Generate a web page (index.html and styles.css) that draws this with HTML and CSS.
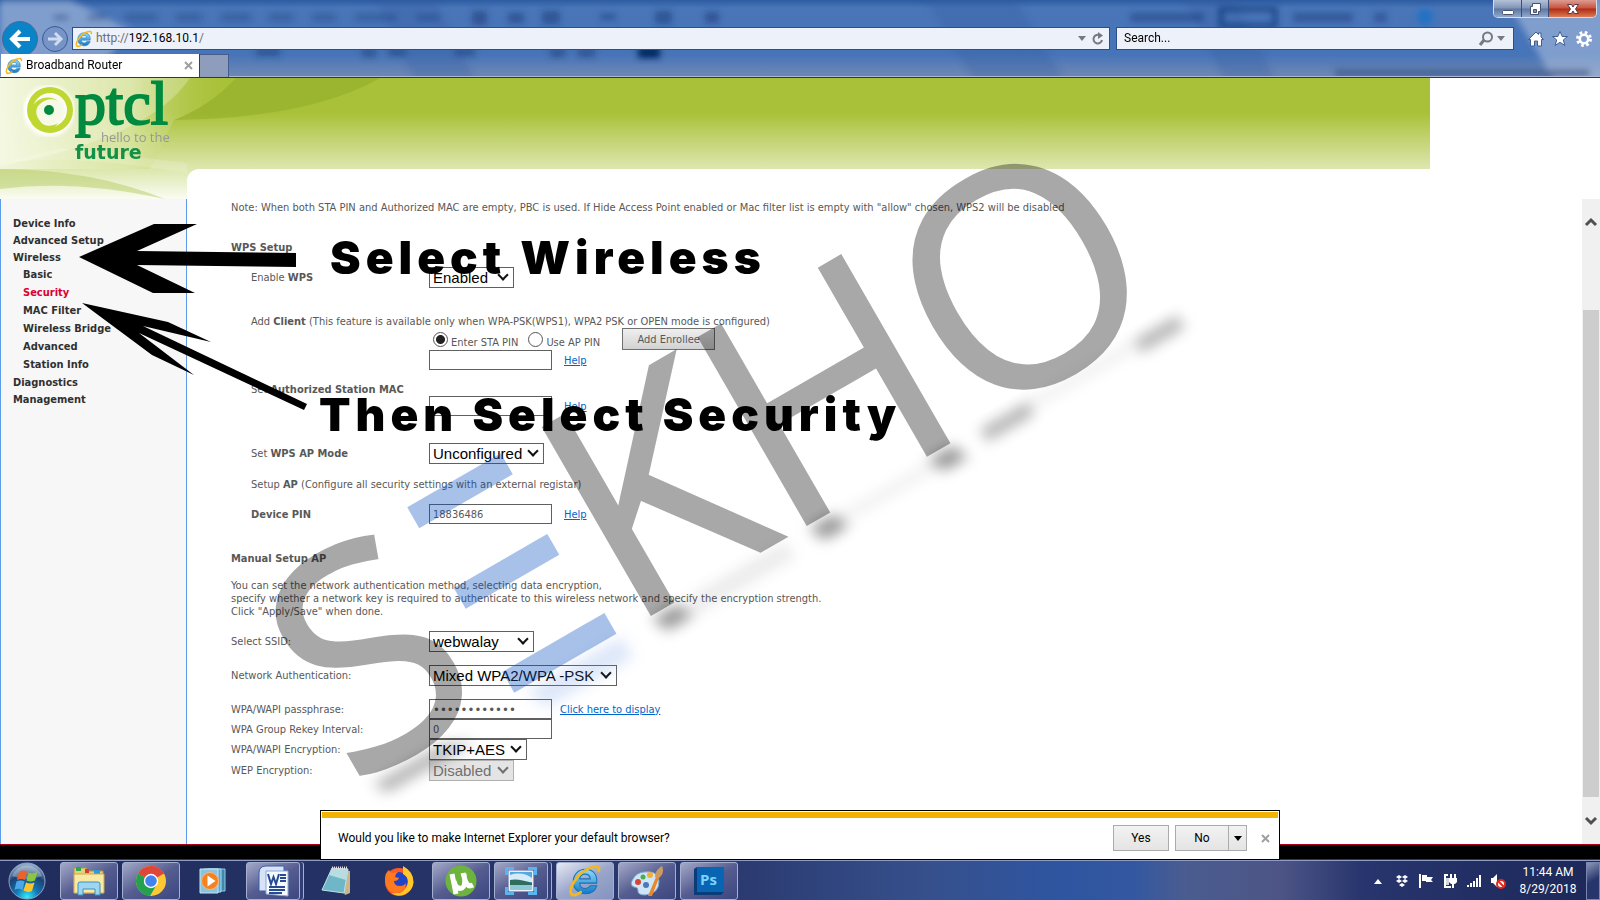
FILE: index.html
```html
<!DOCTYPE html>
<html lang="en">
<head>
  <meta charset="UTF-8"/>
  <meta name="viewport" content="width=device-width,initial-scale=1"/>
  <title>Broadband Router</title>
  <link rel="stylesheet" href="styles.css">
</head>
<body>
  <!-- shared icons -->
  <svg class="defs" aria-hidden="true">
    <defs>
      <linearGradient id="ieBlue" x1="0" y1="0" x2="0" y2="1">
        <stop offset="0" stop-color="#8fdcfa"/><stop offset="1" stop-color="#1479c9"/>
      </linearGradient>
      <symbol id="ie" viewBox="0 0 32 32">
        <path d="M27 18H11c0 3 2.500 5 5.500 5 2 0 3.500-1 4.500-2.500h6C25.500 25.500 21.500 28 16.500 28 9.500 28 5 23 5 16.500S9.500 5 16.500 5 28 10 27 18zM11 14h10c-.3-3-2.300-4.500-5-4.500S11.500 11 11 14z" fill="url(#ieBlue)" stroke="#1672b8" stroke-width="1"/>
        <path d="M4 29C-1 25 8 9 20 4c6-2.500 10-2 9 2.500" fill="none" stroke="#f5b81c" stroke-width="2.600" stroke-linecap="round"/>
        <path d="M4 29c2 1 5-.5 8-2.500" fill="none" stroke="#f5b81c" stroke-width="2.600" stroke-linecap="round"/>
      </symbol>
    </defs>
  </svg>

  <header class="chrome">
    <svg class="glass" aria-hidden="true">
      <defs><filter id="soft"><feGaussianBlur stdDeviation="3"/></filter></defs>
      <g filter="url(#soft)">
        <path d="M370-10h60l50 100h-60zM920-10h90l60 100h-90zM1180-10h50l50 100h-50z" fill="#2b579c" opacity=".25"/>
        <path d="M0 0h70l60 30-40 50H0zM1500-10h110v100h-50z" fill="#c3d0e6" opacity=".45"/>
        <path d="M1335 69h255v8h-255z" fill="#3c5a8c" opacity=".7"/>
        <g fill="#1c407f" opacity=".6">
          <path d="M53 14h16v7H53zM87 14h20v7H87zM125 14h32v7h-32zM176 14h26v7h-26zM221 14h30v7h-30zM269 14h24v7h-24zM312 14h24v7h-24zM355 14h42v7h-42zM416 14h24v7h-24z" opacity=".7"/>
          <path d="M472 11h15v14h-15zM508 13h16v10h-16zM542 11h18v13h-18zM655 11h17v13h-17zM705 12h14v11h-14zM600 14h16v6h-16z"/>
          <path d="M256 48h24v8h-24zM362 48h14v9h-14zM388 48h18v8h-18zM455 48h20v8h-20zM550 48h15v9h-15zM578 48h17v9h-17z"/>
          <path d="M1130 13h74v9h-74zM1293 13h60v9h-60zM1374 13h13v9h-13z" opacity=".9"/>
        </g>
        <rect x="638" y="47" width="22" height="11" fill="#00255e"/>
        <rect x="1221" y="9" width="54" height="17" fill="none" stroke="#1f4688" stroke-width="5"/>
        <circle cx="1425" cy="17" r="8" fill="#2271c4"/>
      </g>
    </svg>
    <div class="win-buttons">
      <button type="button" class="win-min" aria-label="Minimize"><svg width="14" height="14"><rect x="1.500" y="8.500" width="11" height="4" rx="1" fill="#fff" stroke="#44536e"/></svg></button>
      <button type="button" class="win-max" aria-label="Restore"><svg width="14" height="14"><path d="M4.500 1.500h8v8h-2v3h-8v-8h2z" fill="#fff" stroke="#44536e"/><path d="M5.500 7.500h3v3h-3z" fill="#8093b0" stroke="#44536e"/></svg></button>
      <button type="button" class="win-close" aria-label="Close"><svg width="14" height="14"><path d="M1.500 2.500h4L7 5l1.500-2.500h4L9.500 7l3 4.500h-4L7 9l-1.500 2.500h-4l3-4.500z" fill="#fff" stroke="#5c3a44"/></svg></button>
    </div>
    <div class="nav-row">
      <button type="button" class="back" aria-label="Back"><svg width="24" height="24"><path d="M12 4l-8 8 8 8M4 12h18" fill="none" stroke="#fff" stroke-width="4"/></svg></button>
      <button type="button" class="forward" aria-label="Forward"><svg width="18" height="18"><path d="M9 3l6 6-6 6M15 9H2" fill="none" stroke="#cfdbf1" stroke-width="3"/></svg></button>
      <div class="address">
        <svg width="18" height="18" aria-hidden="true"><use href="#ie"/></svg>
        <div class="url"><span>http://</span>192.168.10.1<span>/</span></div>
        <button type="button" aria-label="Show address history"><svg width="8" height="5"><path d="M0 0h8L4 5z" fill="#76797f"/></svg></button>
        <button type="button" class="refresh" aria-label="Refresh"><svg width="14" height="14"><path d="M9 3.500A4.300 4.300 0 1 0 11 8" fill="none" stroke="#76797f" stroke-width="2"/><path d="M7 0l5 3.500L7 7z" fill="#76797f"/></svg></button>
      </div>
      <div class="search">
        <input type="text" placeholder="Search..." aria-label="Search">
        <button type="button" aria-label="Search"><svg width="16" height="16"><circle cx="9.500" cy="6" r="4.500" fill="none" stroke="#76797f" stroke-width="2"/><path d="M6 9l-4 5" stroke="#76797f" stroke-width="3"/></svg></button>
        <button type="button" aria-label="Search options"><svg width="8" height="5"><path d="M0 0h8L4 5z" fill="#76797f"/></svg></button>
      </div>
      <div class="tools">
        <button type="button" aria-label="Home"><svg width="16" height="16"><path d="M8 1l2.500 2.500V2h2.500v4L15.500 8.500h-2V15H9.500v-5h-3v5H2.500V8.500h-2z" fill="#fff" stroke="#3f5e93"/></svg></button>
        <button type="button" aria-label="Favorites"><svg width="16" height="16"><path d="M8 .5l2.200 5h5.300l-4.200 3.400 1.600 5.600L8 11.300l-4.900 3.200 1.600-5.600L.5 5.500h5.300z" fill="#fff" stroke="#3f5e93"/></svg></button>
        <button type="button" aria-label="Tools"><svg width="16" height="16"><circle cx="8" cy="8" r="6.500" fill="none" stroke="#fff" stroke-width="3" stroke-dasharray="2.600 2.500"/><circle cx="8" cy="8" r="4.200" fill="none" stroke="#fff" stroke-width="2.600"/></svg></button>
      </div>
    </div>
    <div class="tabs">
      <div class="tab">
        <svg width="18" height="18" aria-hidden="true"><use href="#ie"/></svg>
        <span>Broadband Router</span>
        <button type="button" aria-label="Close tab"><svg width="9" height="9"><path d="M1 1l7 7M8 1L1 8" stroke="#a0a0a0" stroke-width="2"/></svg></button>
      </div>
      <button type="button" class="new-tab" aria-label="New tab"></button>
    </div>
  </header>

  <div class="router">
    <div class="banner">
      <svg class="leaves" width="380" height="121" aria-hidden="true">
        <defs>
          <linearGradient id="leaf" x1="0" y1="0" x2="1" y2="0">
            <stop offset="0" stop-color="#f0f5d8"/><stop offset=".55" stop-color="#dbe6a6" stop-opacity=".8"/><stop offset="1" stop-color="#a9c138" stop-opacity="0"/>
          </linearGradient>
          <linearGradient id="strip" x1="0" y1="0" x2="0" y2="1">
            <stop offset="0" stop-color="#dbe7ac"/><stop offset="1" stop-color="#fafcf2"/>
          </linearGradient>
        </defs>
        <path d="M236 0h144Q310 40 174 42 210 28 236 0z" fill="#8eaa28" opacity=".5"/>
        <path d="M0 0h236Q210 28 174 42L150 91H0z" fill="url(#leaf)"/>
        <path d="M0 0h190Q150 60 0 88z" fill="#fff" opacity=".25"/>
        <path d="M0 91h200v30H0z" fill="url(#strip)"/>
        <path d="M0 91q90 0 165 30-90-20-165-10z" fill="#b5cc66" opacity=".5"/>
        <path d="M0 85q70-10 187 10v-10L60 70z" fill="#fff" opacity=".15"/>
      </svg>
      <svg class="logo" width="187" height="100" role="img" aria-label="ptcl hello to the future">
        <defs><filter id="halo"><feGaussianBlur stdDeviation="2"/></filter></defs>
        <circle cx="49" cy="33" r="21" fill="#f6f9e6" stroke="#fff" stroke-width="9" filter="url(#halo)"/>
        <circle cx="50" cy="32" r="20" fill="none" stroke="#bfd730" stroke-width="6"/>
        <path d="M58 23c-8-6-20-4-25 5-4 9 1 19 10 22 6 2 12 0 15-5-6 4-14 4-18-2-5-6-5-13 0-17 5-5 12-6 18-3z" fill="#bfd730"/>
        <path d="M29 20q-8 14 2 26" fill="none" stroke="#fff" stroke-width="2"/>
        <circle cx="49" cy="32" r="5" fill="#008a3f"/>
        <text class="logo-name" x="75" y="46">ptcl</text>
        <text class="logo-hello" x="101" y="64">hello to the</text>
        <text class="logo-future" x="75" y="81">future</text>
      </svg>
    </div>

    <div class="body-row">
      <nav class="menu">
        <ul>
          <li><a href="#">Device Info</a></li>
          <li><a href="#">Advanced Setup</a></li>
          <li><a href="#">Wireless</a>
            <ul>
              <li><a href="#">Basic</a></li>
              <li><a href="#" class="current">Security</a></li>
              <li><a href="#">MAC Filter</a></li>
              <li><a href="#">Wireless Bridge</a></li>
              <li><a href="#">Advanced</a></li>
              <li><a href="#">Station Info</a></li>
            </ul>
          </li>
          <li><a href="#">Diagnostics</a></li>
          <li><a href="#">Management</a></li>
        </ul>
      </nav>

      <main>
        <p class="note">Note: When both STA PIN and Authorized MAC are empty, PBC is used. If Hide Access Point enabled or Mac filter list is empty with "allow" chosen, WPS2 will be disabled</p>

        <h2 class="wps-title">WPS Setup</h2>
        <div class="row indent enable">
          <label for="wps">Enable <b>WPS</b></label>
          <span class="select w-s"><select id="wps"><option>Enabled</option></select></span>
        </div>

        <p class="indent client">Add <b>Client</b> (This feature is available only when WPA-PSK(WPS1), WPA2 PSK or OPEN mode is configured)</p>
        <div class="row pins">
          <span></span>
          <div class="radios">
            <input type="radio" name="pin" id="sta" checked><label for="sta">Enter STA PIN</label>
            <input type="radio" name="pin" id="ap"><label for="ap">Use AP PIN</label>
            <button type="button" class="enroll">Add Enrollee</button>
          </div>
        </div>
        <div class="row">
          <span></span>
          <div class="field"><input type="text" aria-label="STA PIN"><a href="#">Help</a></div>
        </div>

        <p class="indent mac"><label for="mac">Set <b>Authorized Station MAC</b></label></p>
        <div class="row">
          <span></span>
          <div class="field"><input type="text" id="mac"><a href="#">Help</a></div>
        </div>

        <div class="row indent mode">
          <label for="mode">Set <b>WPS AP Mode</b></label>
          <span class="select w-m"><select id="mode"><option>Unconfigured</option></select></span>
        </div>
        <p class="indent setup-ap">Setup <b>AP</b> (Configure all security settings with an external registar)</p>
        <div class="row indent gap">
          <label for="pin"><b>Device PIN</b></label>
          <div class="field"><input type="text" id="pin" value="18836486"><a href="#">Help</a></div>
        </div>

        <h2 class="manual-title">Manual Setup AP</h2>
        <p class="about">You can set the network authentication method, selecting data encryption,<br>
          specify whether a network key is required to authenticate to this wireless network and specify the encryption strength.<br>
          Click "Apply/Save" when done.</p>

        <div class="row gap">
          <label for="ssid">Select SSID:</label>
          <span class="select w-l"><select id="ssid"><option>webwalay</option></select></span>
        </div>
        <div class="row gap">
          <label for="auth">Network Authentication:</label>
          <span class="select w-xl"><select id="auth"><option>Mixed WPA2/WPA -PSK</option></select></span>
        </div>
        <div class="row gap">
          <label for="pass">WPA/WAPI passphrase:</label>
          <div class="field near"><input type="password" id="pass" class="dots" value="abcdefghijkl"><a href="#">Click here to display</a></div>
        </div>
        <div class="row">
          <label for="rekey">WPA Group Rekey Interval:</label>
          <div class="field"><input type="text" id="rekey" value="0"></div>
        </div>
        <div class="row">
          <label for="enc">WPA/WAPI Encryption:</label>
          <span class="select w-t"><select id="enc"><option>TKIP+AES</option></select></span>
        </div>
        <div class="row">
          <label for="wep">WEP Encryption:</label>
          <span class="select w-s off"><select id="wep" disabled><option>Disabled</option></select></span>
        </div>
      </main>

      <div class="scrollbar" aria-hidden="true">
        <svg width="14" height="10"><path d="M2 8l5-5 5 5" fill="none" stroke="#505050" stroke-width="3"/></svg>
        <div class="thumb"></div>
        <svg width="14" height="10"><path d="M2 2l5 5 5-5" fill="none" stroke="#505050" stroke-width="3"/></svg>
      </div>
    </div>
  </div>

  <div class="strip"></div>

  <footer class="taskbar">
    <button type="button" class="start" aria-label="Start">
      <svg width="38" height="38" viewBox="0 0 38 38">
        <defs><radialGradient id="orb" cx=".5" cy=".95" r=".9"><stop offset="0" stop-color="#2ff0ff"/><stop offset=".35" stop-color="#1477b5"/><stop offset=".7" stop-color="#1c4273"/><stop offset="1" stop-color="#8fa9c8"/></radialGradient></defs>
        <circle cx="19" cy="19" r="18" fill="url(#orb)" stroke="#8ba3c4"/>
        <path d="M4 14a16 16 0 0 1 30 0q-15 6-30 0z" fill="#fff" opacity=".3"/>
        <path d="M11 10q4-2.500 8-.5L17 18q-4-2-8 0z" fill="#f0602a"/>
        <path d="M20.500 10.500q4 2 9-.5l-2.500 8.500q-4.500 2-8.500 0z" fill="#8cc63f"/>
        <path d="M8.500 19.500q4-2 8 0L14.500 28q-4-2.500-8 0z" fill="#4aa8e8"/>
        <path d="M18 20.500q4 2 8.500 0L24 29q-4 2-8.500-.500z" fill="#fcc52c"/>
      </svg>
    </button>
    <button type="button" class="task open" aria-label="Windows Explorer">
      <svg width="34" height="32" viewBox="0 0 34 32">
        <path d="M2 3h12l2 3h15v22H2z" fill="#e9cf76" stroke="#b8973d"/>
        <path d="M4 2h5v4H4z" fill="#2ea74b"/><path d="M13 4h4v4h-4z" fill="#d33f2f"/><path d="M22 5h6v4h-6z" fill="#2f9ad8"/>
        <path d="M2 9h30v19H2z" fill="#f8e9a4" stroke="#c9a850"/>
        <path d="M6 30V19q0-2 2-2h18q2 0 2 2v11h-5v-6H11v6z" fill="#9ed6f2" stroke="#3d91bd"/>
      </svg>
    </button>
    <button type="button" class="task open" aria-label="Google Chrome">
      <svg width="32" height="32" viewBox="0 0 32 32">
        <circle cx="16" cy="16" r="15" fill="#fcc934"/>
        <path d="M16 16L3 8.500A15 15 0 0 1 29 8.500z" fill="#e0453a"/><path d="M16 1a15 15 0 0 1 13 7.500H16z" fill="#e0453a"/>
        <path d="M3 8.500A15 15 0 0 0 15 31l7-12-6-3z" fill="#23a050"/>
        <circle cx="16" cy="16" r="7.200" fill="#fff"/><circle cx="16" cy="16" r="5.800" fill="#4283f0"/>
      </svg>
    </button>
    <button type="button" class="task" aria-label="Windows Media Player">
      <svg width="30" height="28" viewBox="0 0 30 28">
        <path d="M10 2h17v22H10z" fill="#3f88ad" stroke="#8ecbe4"/><path d="M6 2h17v23H6z" fill="#5fa5c8" stroke="#a8dcf0"/><path d="M2 2h18v24H2z" fill="#8bc4de" stroke="#c4e6f3"/>
        <circle cx="12" cy="14" r="8.500" fill="#f58220" stroke="#fcb77c"/><path d="M9.500 8.500l8 5.500-8 5.500z" fill="#fff"/>
      </svg>
    </button>
    <button type="button" class="task open stack" aria-label="Microsoft Word">
      <svg width="32" height="32" viewBox="0 0 32 32">
        <path d="M9 1h18v25H2V8q0-7 7-7z" fill="#d7e3f6" stroke="#3c5fa8"/><path d="M9 6h22v25l-22-2z" fill="#f6f9fe" stroke="#8fa7d4"/>
        <path d="M11 9l3 10 2.500-7 2.500 7 3-10M23 10h6M23 13h6M23 16h6" fill="none" stroke="#274b92" stroke-width="2"/><path d="M12 22h16M12 25h16M12 28h13" stroke="#274b92" stroke-width="2"/>
      </svg>
    </button>
    <button type="button" class="task" aria-label="Notepad">
      <svg width="32" height="30" viewBox="0 0 32 30">
        <path d="M11 3l18 2v22l-5 2z" fill="#cbb68a"/><path d="M11 2l16 1-4 24-22-3z" fill="#6fb6c6" stroke="#bfe2e8"/><path d="M11 2l16 1-2 11L8 9z" fill="#b7dde2"/><path d="M11 2h16" stroke="#ddd" stroke-width="3" stroke-dasharray="1 1"/>
      </svg>
    </button>
    <button type="button" class="task" aria-label="Firefox">
      <svg width="32" height="32" viewBox="0 0 32 32">
        <circle cx="16" cy="17" r="14" fill="#ff5a26"/><circle cx="16" cy="16" r="9" fill="#2044c8"/>
        <path d="M20 1q11 6 10.500 17A14.500 14.500 0 0 1 8 28q12 2 16-7 3-8-4-12z" fill="#ffc72e"/>
        <path d="M2 14q0-6 4-9 1 3 4 3 3-1 5-1-3 2-3 5l4 1q-1 3-5 3 0 5 6 5 4 0 6-3 0 9-9 10Q3 28 2 14z" fill="#ff7a1f"/>
      </svg>
    </button>
    <button type="button" class="task open" aria-label="uTorrent">
      <svg width="32" height="32" viewBox="0 0 32 32"><circle cx="16" cy="16" r="15.500" fill="#6fb33f"/><path d="M7 9l4 20M9 16q2 9 8 7 4-2 2-14M18 8q2 8 4 11 2 3 6 1" fill="none" stroke="#fff" stroke-width="5"/></svg>
    </button>
    <button type="button" class="task open stack" aria-label="Photo Viewer">
      <svg width="32" height="28" viewBox="0 0 32 28">
        <path d="M4 4h24v20H4z" fill="#fff" stroke="#dde"/><path d="M5 5h22v18H5z" fill="#58a8e0"/><path d="M5 8q12-4 22 3v4H5z" fill="#d5ecf8"/><path d="M5 13q8-2 22 3v3H5z" fill="#2f6e5e"/><path d="M5 18h22v5H5z" fill="#8fc8d8"/>
        <path d="M1.500 8V1.500H9M23 1.500h7.500V8M30.500 20v6.500H23M9 26.500H1.500V20" fill="none" stroke="#5ab4ee" stroke-width="3"/>
      </svg>
    </button>
    <button type="button" class="task open active" aria-label="Internet Explorer"><svg width="34" height="34"><use href="#ie"/></svg></button>
    <button type="button" class="task open" aria-label="Paint">
      <svg width="34" height="32" viewBox="0 0 34 32">
        <path d="M14 7q14-2 15 9 0 13-14 14-8 0-7-5 0-3-4-3-5-2-1-8 3-6 11-7z" fill="#cfe6f8" stroke="#7da9cf"/>
        <circle cx="8" cy="17" r="3" fill="#d84433"/><circle cx="13" cy="12" r="2.500" fill="#4aae48"/><circle cx="20" cy="10" r="3" fill="#f3ae35"/><circle cx="16" cy="20" r="3" fill="#4a78b8"/>
        <path d="M18 31l8-19 3 1-7 18z" fill="#ec8727"/><path d="M25 12q0-7 7-11 3 7-3 12z" fill="#cd9a62"/>
      </svg>
    </button>
    <button type="button" class="task open" aria-label="Photoshop">
      <svg width="32" height="30" viewBox="0 0 32 30"><path d="M1 3l3-2h27v25l-3 3H1z" fill="#0a3c78"/><path d="M4 1h27v25H4z" fill="#0765b4"/><text class="ps" x="7" y="19">Ps</text></svg>
    </button>

    <div class="tray">
      <svg width="16" height="16"><path d="M8 6l4 5H4z" fill="#fff"/></svg>
      <svg width="16" height="16"><path d="M5 2l3 2-3 2-3-2zM11 2l3 2-3 2-3-2zM5 6l3 2-3 2-3-2zM11 6l3 2-3 2-3-2zM8 10l3 2-3 2-3-2z" fill="#fff"/></svg>
      <svg width="16" height="16"><path d="M2 1v14" stroke="#fff" stroke-width="2"/><path d="M4 2h5v2h6l-2 3 2 2H8V8H4z" fill="#fff"/></svg>
      <svg width="16" height="16"><path d="M6 2H3v12h6" fill="none" stroke="#fff" stroke-width="2"/><path d="M4 5h3v7H4z" fill="#cfd6e8"/><path d="M7 5h8v4l-2 2H9L7 9zM8 1h2v4H8zM12 1h2v4h-2zM10 11h2v4h-2z" fill="#fff"/></svg>
      <svg width="16" height="16"><path d="M1 12h2v2H1zM4 10h2v4H4zM7 8h2v6H7zM10 5h2v9h-2zM13 2h2v12h-2z" fill="#fff"/></svg>
      <svg width="16" height="16"><path d="M1 5h2l4-4v13l-4-4H1z" fill="#fff"/><circle cx="11" cy="11" r="4" fill="#fff" stroke="#e02a20" stroke-width="2"/><path d="M8 8l6 6" stroke="#e02a20" stroke-width="2"/></svg>
      <div class="clock">11:44 AM<br>8/29/2018</div>
      <button type="button" class="show-desktop" aria-label="Show desktop"></button>
    </div>
  </footer>

  <div class="notice" role="alert">
    <span class="question">Would you like to make Internet Explorer your default browser?</span>
    <button type="button" class="yes">Yes</button>
    <div class="split">
      <button type="button" class="no">No</button><button type="button" class="more" aria-label="More options"><svg width="8" height="5"><path d="M0 0h8L4 5z"/></svg></button>
    </div>
    <button type="button" class="dismiss" aria-label="Close"><svg width="9" height="9"><path d="M1 1l7 7M8 1L1 8" stroke="#a0a0a0" stroke-width="2"/></svg></button>
  </div>

  <!-- watermark, arrows and captions drawn over the page -->
  <svg class="overlay" width="1200" height="830">
    <defs><filter id="shade" x="-50%" y="-50%" width="200%" height="200%"><feGaussianBlur stdDeviation="7"/></filter></defs>
    <g transform="rotate(-30)">
      <g filter="url(#shade)">
        <path d="M255 862h30l8 18h-30zM436 862h28l8 18h-28zM574 862h28l8 18h-28z" opacity=".4"/>
        <path d="M-70 866h80l30 14H-60zM634 862h54v14h-54zM812 862h50v14h-50z" opacity=".3"/>
        <path d="M300 862h110v18H290zM460 866h120v8H460zM680 862h130v8H680z" opacity=".08"/>
        <path d="M110 862h110v24H120z" fill="#5a8be0" opacity=".2"/>
      </g>
      <g class="mark">
        <text x="-91" y="858">S</text>
        <text x="227" y="858">K</text>
        <text x="407" y="858">H</text>
        <text x="627" y="858">O</text>
      </g>
      <path d="M99 643h108v24H99zM99 736h108v24H99zM99 833h118v24H99z" fill="#0049bf" opacity=".34"/>
    </g>
    <path d="M79 257l75-33h43l-60 27 159 2v14l-159-2 58 28h-42z"/>
    <path d="M82 303l86 19 43 20-68-16 164 78-3 6-165-77 55 42-42-20z"/>
    <text class="caption" x="330" y="274">Select Wireless</text>
    <text class="caption" x="319" y="431">Then Select Security</text>
  </svg>
</body>
</html>
```
FILE: styles.css
```css
*, *::before, *::after { box-sizing: border-box; margin:0; padding:0 }
body {
  min-height:100vh;
  display:flex; flex-direction:column;
  position:relative;
  overflow:hidden;
  background:#fff;
  font-family:"DejaVu Sans Condensed","DejaVu Sans",sans-serif;
  font-size:11px; line-height:13px;
  color:#585858;
}
button { border:none; background:none; font:inherit; color:inherit; display:flex; align-items:center; justify-content:center; }
ul { list-style:none }
.defs { position:absolute; width:0; height:0 }

/* browser chrome */
.chrome {
  position:relative;
  padding-top:27px;
  background:linear-gradient(#2d5ca3, #4a76b8 8px, #4674b8 54px, #6b86b4 74px);
  border-bottom:1px solid #27365c;
  box-shadow:inset 0 -1px #a9b9d6;
  font-family:Roboto,"Open Sans",sans-serif;
  font-size:12px;
  color:#000;
}
.glass { position:absolute; left:0; top:0; width:100%; height:76px; }
.win-buttons {
  position:absolute; right:3px; top:0;
  display:flex;
  border:1px solid #d5dded; border-top:none;
  border-radius:0 0 5px 5px;
  overflow:hidden;
}
.win-buttons button { height:17px; background:linear-gradient(#b4c2d8, #8195b8 8px, #5c77a5 9px, #93a8ca); border-right:1px solid #3a4d74; }
.win-min { width:28px }
.win-max { width:27px }
.win-buttons .win-close { width:47px; border-right:none; background:linear-gradient(#dd9c92, #c8543f 8px, #b02c14 9px, #dc7b54); }
.nav-row { position:relative; display:flex; height:23px; align-items:center; padding-left:2px; }
.back { width:36px; height:36px; flex:none; border-radius:50%; background:#0a84c8; border:1px solid #4b6894; }
.forward { width:26px; height:26px; flex:none; margin:0 4px; border-radius:50%; border:1px solid #3c5a92; background:#7694c8; }
.address, .search { display:flex; align-items:center; height:23px; background:#edf1f9; border:1px solid #2c4f8c; }
.address { flex:1; padding-left:2px; }
.url { flex:1; padding-left:3px; }
.url span { color:#6d6d6d }
.address button { width:16px }
.address .refresh { margin-right:3px }
.search { width:398px; margin:0 7px 0 6px; padding-left:7px; }
.search input { flex:1; min-width:0; border:none; background:none; font:inherit; outline:none; }
.search input::placeholder { color:#000; opacity:1 }
.search button { width:18px }
.search button:last-child { margin-right:6px; width:12px }
.tools { display:flex; gap:8px; padding:0 8px 0 7px; }
.tabs { position:relative; display:flex; height:27px; padding:4px 0 0 1px; }
.tab { width:199px; display:flex; align-items:center; gap:3px; padding:0 6px 0 4px; background:#fff; border-right:1px solid #2c3f6c; }
.tab span { flex:1 }
.new-tab { width:29px; background:#8e9dbb; border:1px solid #445d8d; border-width:1px 1px 0 0; }

/* router page */
.router { flex:1; display:flex; flex-direction:column; }
.banner {
  position:relative;
  width:calc(100% - 170px); height:91px;
  background:linear-gradient(#a9c138 35px, #dee7b0);
}
.leaves, .logo { position:absolute; left:0; top:0 }
.logo-name { font-family:"Liberation Serif",serif; font-size:62px; fill:#008a3f; stroke:#008a3f; stroke-width:2px; }
.logo-hello { font-family:"Open Sans",sans-serif; font-size:13px; fill:#979797; stroke:#979797; }
.logo-hello { stroke-width:0 }
.logo-future { font-family:"DejaVu Sans",sans-serif; font-weight:bold; font-size:19px; fill:#149048; }
.body-row { flex:1; display:flex; }
.menu {
  width:187px; flex:none;
  margin-top:30px; padding:16px 12px;
  background:#f7f7f7;
  border:1px solid #5c9ce8; border-width:0 1px;
}
.menu li { line-height:17px; }
.menu ul ul { padding-left:10px }
.menu ul ul li { line-height:18px }
.menu a { color:#303030; font-weight:bold; text-decoration:none; white-space:nowrap; }
.menu a.current { color:#dc0030 }
main {
  position:relative;
  flex:1;
  padding:32px 0 0 44px;
  background:#fff;
  border-top-left-radius:12px;
}
h2 { font-size:11px; font-weight:bold; }
.indent { padding-left:20px }
.wps-title { margin-top:27px }
.enable { margin-top:13px }
.client { margin-top:27px }
.mac { margin-top:13px }
.mode { margin-top:27px }
.setup-ap { margin-top:14px }
.manual-title { margin-top:28px }
.about { margin-top:14px }
.gap { margin-top:13px }
.row { display:flex; align-items:center; }
.row > :first-child { width:198px; flex:none; }
.row.indent > :first-child { width:178px }
.select { position:relative; height:21px; }
.select select {
  appearance:none;
  width:100%; height:21px;
  padding:0 3px;
  border:1px solid #606060; border-radius:0;
  background:#fff;
  font-family:"Liberation Sans",Arial,sans-serif; font-size:15px;
  color:#000;
}
.select::after {
  content:""; position:absolute; right:7px; top:4px;
  width:8px; height:8px;
  border:solid #111; border-width:0 2px 2px 0;
  transform:rotate(45deg);
  pointer-events:none;
}
.off select { background:#e4e4e4; color:#707070; border-color:#b0b0b0; opacity:1; }
.off::after { border-color:#707070 }
.w-s { width:85px }
.w-m { width:115px }
.w-l { width:105px }
.w-xl { width:188px }
.w-t { width:98px }
.pins { height:22px }
.radios { display:flex; align-items:center; padding-left:4px; }
.radios input { appearance:none; width:15px; height:15px; border:1px solid #555; border-radius:50%; background:#fff; margin-right:3px; }
.radios input:checked { background:radial-gradient(#222 4px, #fff 5px); }
.radios label { padding-top:6px; margin-right:10px; }
.enroll { width:93px; height:22px; margin-left:12px; border:1px solid #707070; background:linear-gradient(#efefef, #d2d2d2); }
.field { display:flex; align-items:center; gap:12px; }
.near { gap:8px }
.field input { width:123px; height:20px; padding:0 3px; border:1px solid #606060; font:inherit; color:inherit; background:#fff; }
.field .dots { font-size:13px }
.field a { color:#0066cc }
.scrollbar {
  width:18px; flex:none;
  margin-top:30px; padding:18px 0;
  display:flex; flex-direction:column; align-items:center;
  background:#f0f0f0;
}
.thumb { flex:1; align-self:stretch; margin:83px 1px 19px; background:#cdcdcd; }

/* bottom of the screen */
.strip { height:16px; background:#000; border:solid #b00020; border-width:1px 0; }
.taskbar {
  display:flex; align-items:center;
  height:40px;
  padding-left:8px;
  background:linear-gradient(90deg, #202c5c, #263468 30%, #2b3a70 46%, #36508c 58%, #2f55a0 66%, #3458a0 71%, #4a5c90 74%, #4d5585 80%, #28356e 85%, #1c2858);
  border-top:1px solid #8c9cc4;
}
.start { width:38px; height:38px; margin-right:14px; }
.task { width:58px; height:38px; margin-right:4px; border-radius:3px; }
.open { border:1px solid #a5afcf; background:linear-gradient(150deg, #a4a9c8, #555d90 50%, #3c4680); }
.stack { box-shadow:3px 0 #323e74, 4px 0 #a5afcf; width:54px; margin-right:8px; }
.active { background:linear-gradient(150deg, #e6e9f4, #9aa6ca 50%, #8494c0); }
.ps { font-family:"Open Sans",sans-serif; font-weight:bold; font-size:15px; fill:#7fd2f8; }
.tray { margin-left:auto; display:flex; align-items:center; gap:8px; color:#fff; font-family:Roboto,"Open Sans",sans-serif; font-size:12px; line-height:17px; text-align:center; }
.clock { width:60px; margin-left:4px; white-space:nowrap; }
.show-desktop { width:14px; height:38px; background:linear-gradient(150deg, #8b96b8, #26356c 50%); border:1px solid #7987ae; }

.notice {
  position:absolute; left:20%; right:20%; bottom:40px;
  height:50px;
  display:flex; align-items:center;
  padding:6px 9px 0 17px;
  background:#fff;
  border:1px solid #000;
  font-family:Roboto,"Open Sans",sans-serif; font-size:12px;
  color:#000;
}
.notice::before { content:""; position:absolute; left:1px; right:1px; top:1px; height:6px; background:#f3b200; }
.question { flex:1 }
.notice button { height:26px; }
.notice .yes, .notice .no, .notice .more { border:1px solid #ababab; background:linear-gradient(#f2f2f2, #e4e4e4); }
.notice .yes { width:56px; margin-right:6px; }
.split { display:flex; margin-right:13px; }
.notice .no { width:54px }
.notice .more { width:19px; margin-left:-1px; }
.notice .dismiss { width:10px }

.overlay { position:absolute; left:0; top:0; pointer-events:none; }
.mark { font-family:"Open Sans",sans-serif; font-size:303px; stroke:#000; stroke-width:2px; opacity:.34; }
.caption { font-family:Inter,"Liberation Sans",sans-serif; font-weight:900; font-size:46px; letter-spacing:5px; }
```
